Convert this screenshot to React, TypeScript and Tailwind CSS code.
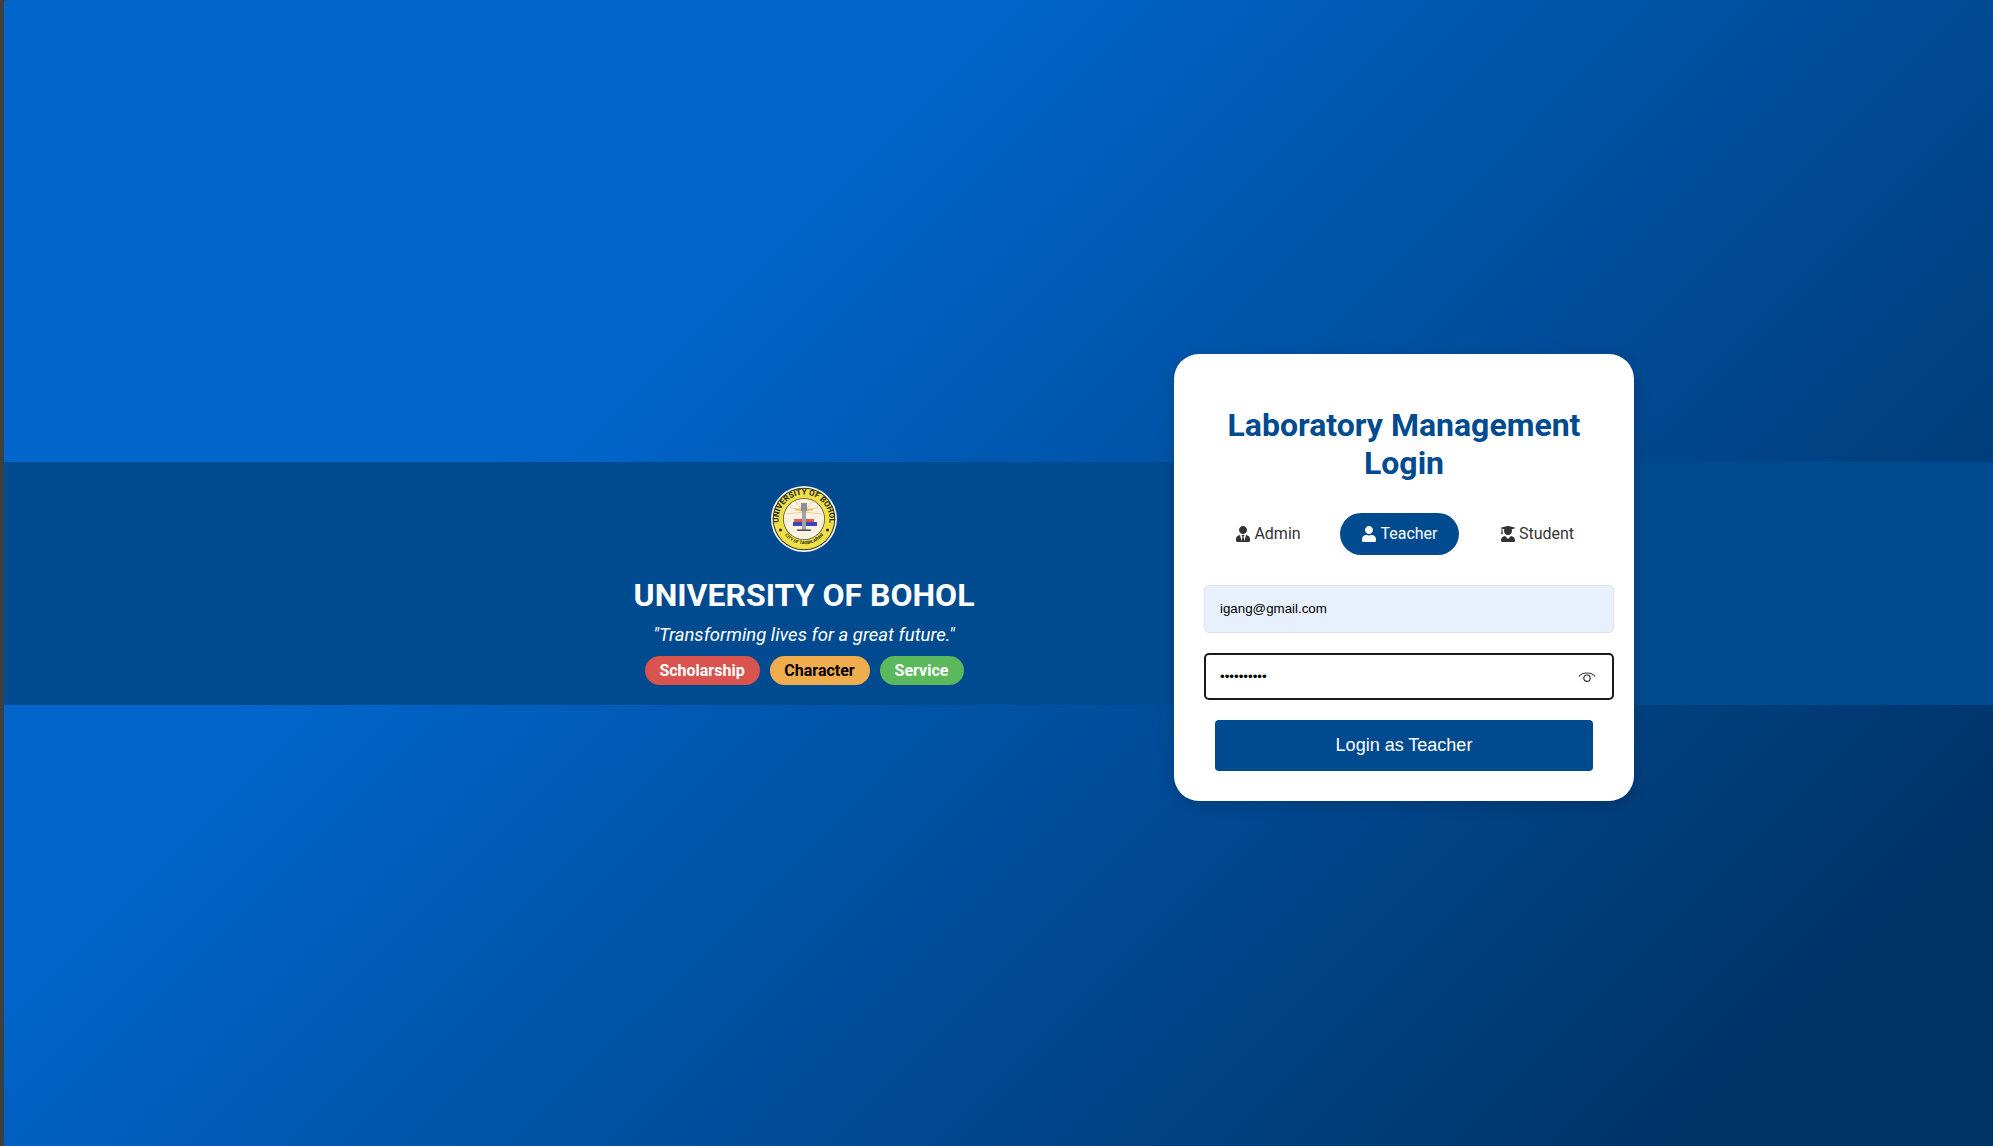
import { FaUser, FaUserGraduate, FaUserTie } from "react-icons/fa";

const PILLS = [
  { label: "Scholarship", className: "bg-[#d9534f] text-white w-[115px]" },
  { label: "Character", className: "bg-[#f0ad4e] text-black w-[100px]" },
  { label: "Service", className: "bg-[#5cb85c] text-white w-[84px]" },
];

// University seal, drawn small: ring with lettering, crest in the middle
function Seal() {
  return (
    <svg viewBox="0 0 66 66" className="h-[66px] w-[66px]">
      <circle cx="33" cy="33" r="33" fill="#f4f4f0" />
      <circle cx="33" cy="33" r="31.3" fill="#3a3a20" />
      <circle cx="33" cy="33" r="30.3" fill="#efe04a" />
      <circle cx="33" cy="33" r="21" fill="#55552c" />
      <circle cx="33" cy="33" r="20.2" fill="#fbf3e2" />
      <defs>
        <path id="seal-top" d="M8.2 40 A25.5 25.5 0 1 1 57.8 40" />
        <path id="seal-bottom" d="M11 45 A25 25 0 0 0 55 45" />
      </defs>
      <text fontFamily="Roboto, sans-serif" fontSize="8" fontWeight="700" fill="#26261a">
        <textPath href="#seal-top" startOffset="50%" textAnchor="middle">UNIVERSITY OF BOHOL</textPath>
      </text>
      <text fontFamily="Roboto, sans-serif" fontSize="4.4" fontWeight="700" fill="#26261a">
        <textPath href="#seal-bottom" startOffset="50%" textAnchor="middle">CITY OF TAGBILARAN</textPath>
      </text>
      <circle cx="9.5" cy="44" r="1.5" fill="#26261a" />
      <circle cx="56.5" cy="44" r="1.5" fill="#26261a" />
      <path d="M33 26 L19 21 M33 26 L24 15 M33 26 L42 15 M33 26 L47 21 M33 26 L15.5 28 M33 26 L50.5 28" stroke="#f0b58a" strokeWidth="0.7" />
      <rect x="24" y="22.5" width="18" height="2" fill="#e9c24a" />
      <rect x="30" y="17" width="6" height="8" fill="#8d9197" />
      <rect x="23" y="33" width="20" height="3" fill="#e6564a" />
      <rect x="22" y="36" width="10" height="4" fill="#3448b8" />
      <rect x="34" y="36" width="12" height="4" fill="#3448b8" />
      <rect x="31" y="25" width="4" height="19" fill="#a2a5a8" />
      <rect x="26" y="43.5" width="14" height="1.4" fill="#404040" />
    </svg>
  );
}

function RoleTab({ icon, label, active, className }: { icon: React.ReactNode; label: string; active?: boolean; className: string }) {
  return (
    <div
      className={
        active
          ? "flex h-[42px] items-center justify-center gap-[3px] rounded-[21px] bg-[#004a8f] text-white " + className
          : "flex h-[42px] items-center justify-center gap-[3px] text-[#333333] " + className
      }
    >
      {icon}
      <span>{label}</span>
    </div>
  );
}

export default function App() {
  return (
    <div className="flex h-screen bg-[#3f3f3f] pl-1 font-['Roboto',sans-serif]">
      <div className="relative flex flex-1 items-start overflow-hidden rounded-tl-[4px] bg-[linear-gradient(135deg,#0066cc_30%,#003366_90%)]">
        {/* Band behind the brand block, the card sits over it */}
        <div className="absolute inset-x-0 top-[462px] h-[243px] bg-[#004a8f]" />

        <div className="relative flex w-full gap-[140px] pl-[570px] pt-[354px]">
          <div className="flex w-[460px] flex-col items-center pt-[132px]">
            <Seal />
            <h1 className="mt-[24px] text-[32px] leading-[38px] font-bold text-white">UNIVERSITY OF BOHOL</h1>
            <p className="mt-[9px] text-[18.5px] leading-[24px] text-white italic">"Transforming lives for a great future."</p>
            <div className="mt-[9px] flex gap-[10px]">
              {PILLS.map((p) => (
                <span key={p.label} className={"flex h-[29px] items-center justify-center rounded-full text-[16px] font-bold " + p.className}>
                  {p.label}
                </span>
              ))}
            </div>
          </div>

          <div className="h-[447px] w-[460px] rounded-[25px] bg-white px-[30px] pt-[52px] shadow-[0_4px_16px_rgba(0,0,0,0.15)]">
            <h2 className="text-center text-[32px] leading-[38px] font-bold text-[#004a8f]">
              Laboratory Management
              <br />
              Login
            </h2>
            <div className="mt-[31px] flex items-center text-[16px]">
              <RoleTab icon={<FaUserTie className="h-4 w-4" />} label="Admin" className="ml-[17px] w-[94px]" />
              <RoleTab icon={<FaUser className="h-4 w-4" />} label="Teacher" active className="ml-[25px] w-[119px]" />
              <RoleTab icon={<FaUserGraduate className="h-4 w-4" />} label="Student" className="ml-[31px] w-[94px]" />
            </div>
            <div className="mt-[30px] flex h-[48px] w-[410px] items-center rounded-[5px] border border-[#dfe3ea] bg-[#e8f0fe] px-[15px] font-['Liberation_Sans',sans-serif] text-[13.33px] text-black">
              igang@gmail.com
            </div>
            <div className="mt-[20px] flex h-[47px] w-[410px] items-center justify-between rounded-[5px] border-2 border-[#1a1a1a] bg-white pr-[16px] pl-[14px] font-['Liberation_Sans',sans-serif] text-[13.33px] text-black">
              <span>••••••••••</span>
              <svg viewBox="0 0 18 14" className="h-[14px] w-[18px]" fill="none" stroke="#333333" strokeWidth="1.2">
                <path d="M1 6.5 C4 1.8 14 1.8 17 6.5" />
                <circle cx="9" cy="8.2" r="3.2" />
              </svg>
            </div>
            <button className="mt-[20px] ml-[11px] block h-[51px] w-[378px] rounded-[4px] bg-[#004a8f] font-['Liberation_Sans',sans-serif] text-[18px] text-white">
              Login as Teacher
            </button>
          </div>
        </div>
      </div>
    </div>
  );
}
